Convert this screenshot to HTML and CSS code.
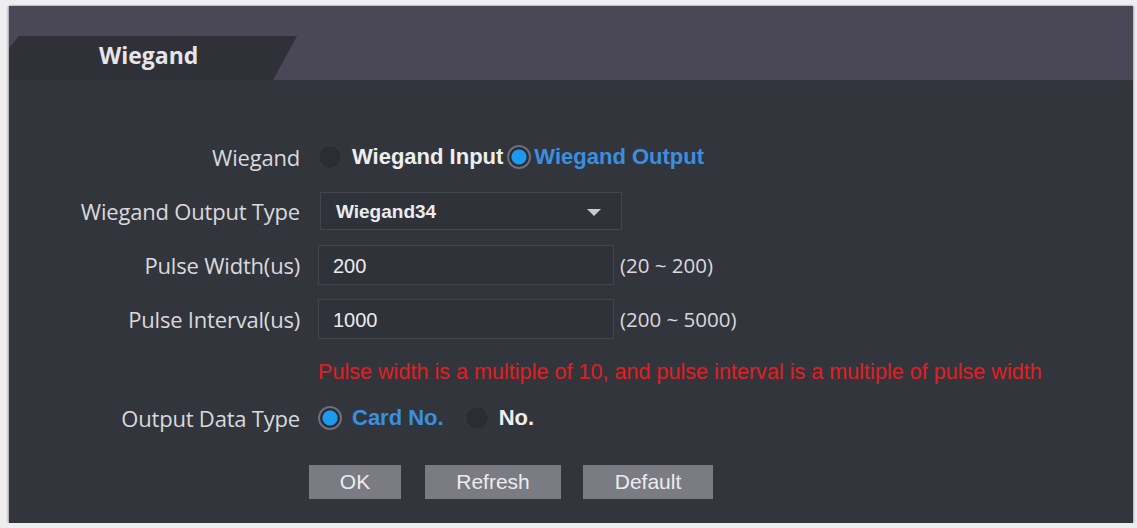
FILE: index.html
```html
<!DOCTYPE html>
<html lang="en">
<head>
    <meta charset="UTF-8">
    <meta name="viewport" content="width=device-width, initial-scale=1.0">
    <title>Wiegand</title>
    <link rel="stylesheet" href="styles.css">
</head>
<body>
    <div class="panel">
        <!-- Tab strip -->
        <div class="tabbar">
            <div class="tab">Wiegand</div>
        </div>

        <!-- Settings form -->
        <div class="form">
            <div class="row">
                <label class="label">Wiegand</label>
                <div class="field">
                    <span class="radio"></span>
                    <span class="opt">Wiegand Input</span>
                    <span class="radio on tight"></span>
                    <span class="opt on near">Wiegand Output</span>
                </div>
            </div>

            <div class="row">
                <label class="label">Wiegand Output Type</label>
                <div class="field">
                    <div class="select">
                        <span>Wiegand34</span>
                        <span class="arrow"></span>
                    </div>
                </div>
            </div>

            <div class="row">
                <label class="label">Pulse Width(us)</label>
                <div class="field">
                    <input class="input" type="text" value="200">
                    <span class="range">(20 ~ 200)</span>
                </div>
            </div>

            <div class="row">
                <label class="label">Pulse Interval(us)</label>
                <div class="field">
                    <input class="input" type="text" value="1000">
                    <span class="range">(200 ~ 5000)</span>
                </div>
            </div>

            <div class="row hint-row">
                <span class="label"></span>
                <p class="hint">Pulse width is a multiple of 10, and pulse interval is a multiple of pulse width</p>
            </div>

            <div class="row">
                <label class="label">Output Data Type</label>
                <div class="field">
                    <span class="radio on"></span>
                    <span class="opt on">Card No.</span>
                    <span class="radio wide"></span>
                    <span class="opt">No.</span>
                </div>
            </div>

            <div class="row buttons">
                <span class="label"></span>
                <div class="field">
                    <button class="btn ok">OK</button>
                    <button class="btn refresh">Refresh</button>
                    <button class="btn default">Default</button>
                </div>
            </div>
        </div>
    </div>
</body>
</html>
```

FILE: styles.css
```css
body {
    margin: 0;
    background-color: #eeeef0;
    font-family: "Open Sans", "Liberation Sans", sans-serif;
}
.panel {
    margin: 6px 0 0 9px;
    width: 1124px;
    height: 517px;
    background: #33353c;
    box-shadow: -1px 0 2px rgba(0, 0, 0, 0.35), 1px 0 2px rgba(0, 0, 0, 0.25);
}
.tabbar {
    height: 74px;
    background: #4a4857;
    display: flex;
    align-items: flex-end;
}
.tab {
    width: 288px;
    height: 44px;
    box-sizing: border-box;
    padding: 0 0 6px 90px;
    display: flex;
    align-items: center;
    background: #2f3038;
    clip-path: polygon(10px 0, 288px 0, 264px 100%, 0 100%, 0 12px);
    color: #e6e6ea;
    font-weight: bold;
    font-size: 23px;
}
.form {
    padding-top: 57px;
    display: flex;
    flex-direction: column;
    gap: 14px;
}
.row {
    display: flex;
    align-items: center;
    height: 40px;
}
.label {
    width: 291px;
    flex: none;
    text-align: right;
    padding-right: 18px;
    color: #d9d9de;
    font-size: 22px;
    letter-spacing: -0.2px;
}
.field {
    display: flex;
    align-items: center;
}
.radio {
    width: 24px;
    height: 24px;
    box-sizing: border-box;
    border-radius: 50%;
    border: 1px solid #3a3b42;
    background: #2c2d33;
    flex: none;
}
.radio.on {
    border: 2px solid #6d6f7b;
    background: radial-gradient(circle, #1c9af0 7px, #2b2c33 8px);
}
.radio.tight {
    margin-left: -6px;
}
.radio.wide {
    margin-left: 11px;
}
.opt {
    font-family: "Liberation Sans", Arial, sans-serif;
    font-weight: bold;
    font-size: 22px;
    color: #eeeef0;
    margin: 0 10px 0 10px;
}
.opt.on {
    color: #3a8fe0;
}
.opt.near {
    margin-left: 3px;
}
.select {
    width: 302px;
    height: 38px;
    box-sizing: border-box;
    border: 1px solid #44464e;
    background: #30323a;
    display: flex;
    align-items: center;
    justify-content: space-between;
    padding: 2px 20px 0 15px;
    margin-left: 2px;
    font-family: "Liberation Sans", Arial, sans-serif;
    font-weight: bold;
    font-size: 19px;
    color: #ececef;
}
.arrow {
    width: 0;
    height: 0;
    border-left: 7px solid transparent;
    border-right: 7px solid transparent;
    border-top: 7px solid #c9c9cf;
}
.input {
    width: 296px;
    height: 40px;
    box-sizing: border-box;
    border: 1px solid #44464e;
    background: #30323a;
    padding: 3px 14px 0;
    font-family: "Liberation Sans", Arial, sans-serif;
    font-size: 20px;
    color: #ececef;
    outline: none;
}
.range {
    margin-left: 6px;
    font-size: 20.5px;
    color: #d9d9de;
}
.hint-row {
    height: 24px;
    margin-top: 7px;
}
.hint {
    margin: 0;
    font-family: "Liberation Sans", Arial, sans-serif;
    font-size: 21.6px;
    color: #e01f22;
    white-space: nowrap;
}
.buttons {
    margin-top: 13px;
    height: 34px;
}
.btn {
    height: 34px;
    border: none;
    background: #7a7b83;
    color: #ececef;
    font-family: "Liberation Sans", Arial, sans-serif;
    font-size: 21px;
    cursor: pointer;
}
.ok {
    width: 92px;
    margin-left: -9px;
}
.refresh {
    width: 136px;
    margin-left: 24px;
}
.default {
    width: 130px;
    margin-left: 22px;
}
```
